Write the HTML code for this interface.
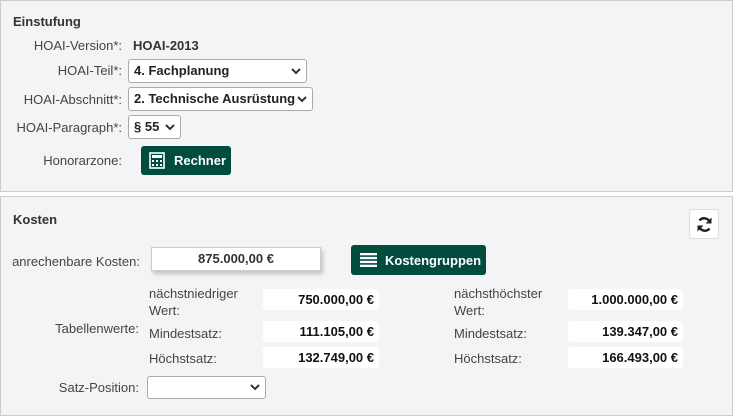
<!DOCTYPE html>
<html><head><meta charset="utf-8"><style>
*{box-sizing:border-box;margin:0;padding:0}
body{width:733px;height:412px;background:#fff;font-family:"Liberation Sans",sans-serif;font-size:13px;color:#333;position:relative;overflow:hidden}
.p{position:absolute;left:0;width:733px;background:#f3f4f6;border:1px solid #ccc}
.a{position:absolute;white-space:nowrap}
.r{text-align:right}
.lbl{color:#444}
.sel{position:absolute;background:#fff;border:1px solid #aaa;border-radius:3px;font-weight:bold;padding-left:5px;line-height:21px;color:#222}
.sel svg{position:absolute;right:5px;top:8px}
.btn{position:absolute;background:#004d3d;color:#fff;font-weight:bold;border-radius:3px}
.v{position:absolute;background:#fff;border-radius:3px;font-weight:bold;text-align:right;padding-right:5px;line-height:21px;color:#111}
</style></head><body>
<div class="p" style="top:0;height:192px"></div>
<div class="p" style="top:196px;height:220px"></div>
<div class="a" style="left:13px;top:14px;font-weight:bold">Einstufung</div>
<div class="a r lbl" style="right:611px;top:38px">HOAI-Version*:</div>
<div class="a" style="left:133px;top:38px;font-weight:bold">HOAI-2013</div>
<div class="a r lbl" style="right:611px;top:63px">HOAI-Teil*:</div>
<div class="sel" style="left:128px;top:59px;width:179px;height:24px">4. Fachplanung<svg width="10" height="7"><path d="M1 1l4 4 4-4" stroke="#333" stroke-width="2" fill="none"/></svg></div>
<div class="a r lbl" style="right:611px;top:92px">HOAI-Abschnitt*:</div>
<div class="sel" style="left:128px;top:87px;width:185px;height:24px">2. Technische Ausrüstung<svg width="10" height="7"><path d="M1 1l4 4 4-4" stroke="#333" stroke-width="2" fill="none"/></svg></div>
<div class="a r lbl" style="right:611px;top:120px">HOAI-Paragraph*:</div>
<div class="sel" style="left:128px;top:115px;width:53px;height:24px">§ 55<svg width="10" height="7"><path d="M1 1l4 4 4-4" stroke="#333" stroke-width="2" fill="none"/></svg></div>
<div class="a r lbl" style="right:611px;top:153px">Honorarzone:</div>
<div class="btn" style="left:141px;top:146px;width:90px;height:29px"><svg style="position:absolute;left:8px;top:6px" width="16" height="17" viewBox="0 0 16 17"><rect x="1" y="1" width="14" height="15" fill="none" stroke="#fff" stroke-width="1.6"/><rect x="3" y="3" width="10" height="3" fill="#fff"/><g fill="#fff"><rect x="3" y="8" width="2" height="2"/><rect x="7" y="8" width="2" height="2"/><rect x="11" y="8" width="2" height="2"/><rect x="3" y="12" width="2" height="2"/><rect x="7" y="12" width="2" height="2"/><rect x="11" y="12" width="2" height="2"/></g></svg><span class="a" style="left:33px;top:7px">Rechner</span></div>
<div class="a" style="left:13px;top:212px;font-weight:bold">Kosten</div>
<div class="a" style="left:689px;top:209px;width:30px;height:30px;background:#fff;border:1px solid #ddd;border-radius:4px"><svg style="position:absolute;left:6px;top:6px" width="17" height="17" viewBox="0 0 17 17"><path d="M14 7A6 6 0 0 0 3.5 4.5M3 10a6 6 0 0 0 10.5 2.5" stroke="#222" stroke-width="2.4" fill="none"/><path d="M15.5 1.5v6h-6z M1.5 15.5v-6h6z" fill="#222"/></svg></div>
<div class="a r lbl" style="right:593px;top:254px">anrechenbare Kosten:</div>
<div class="a" style="left:151px;top:247px;width:170px;height:24px;background:#fff;border:1px solid #ccc;box-shadow:2px 3px 4px rgba(0,0,0,.2);text-align:center;line-height:22px;font-weight:bold">875.000,00 €</div>
<div class="btn" style="left:351px;top:245px;width:135px;height:30px"><svg style="position:absolute;left:9px;top:8px" width="17" height="14"><g fill="#fff"><rect x="0" y="0" width="17" height="2.3"/><rect x="0" y="3.9" width="17" height="2.3"/><rect x="0" y="7.8" width="17" height="2.3"/><rect x="0" y="11.7" width="17" height="2.3"/></g></svg><span class="a" style="left:34px;top:8px">Kostengruppen</span></div>
<div class="a r lbl" style="right:594px;top:321px">Tabellenwerte:</div>
<div class="a lbl" style="left:149px;top:285px;line-height:17px">nächstniedriger<br>Wert:</div>
<div class="a lbl" style="left:149px;top:326px">Mindestsatz:</div>
<div class="a lbl" style="left:149px;top:351px">Höchstsatz:</div>
<div class="v" style="left:263px;top:289px;width:116px">750.000,00 €</div>
<div class="v" style="left:263px;top:321px;width:116px">111.105,00 €</div>
<div class="v" style="left:263px;top:347px;width:116px">132.749,00 €</div>
<div class="a lbl" style="left:454px;top:285px;line-height:17px">nächsthöchster<br>Wert:</div>
<div class="a lbl" style="left:454px;top:326px">Mindestsatz:</div>
<div class="a lbl" style="left:454px;top:351px">Höchstsatz:</div>
<div class="v" style="left:568px;top:289px;width:115px">1.000.000,00 €</div>
<div class="v" style="left:568px;top:321px;width:115px">139.347,00 €</div>
<div class="v" style="left:568px;top:347px;width:115px">166.493,00 €</div>
<div class="a r lbl" style="right:594px;top:380px">Satz-Position:</div>
<div class="sel" style="left:147px;top:376px;width:119px;height:23px"><svg width="10" height="7" style="top:7px"><path d="M1 1l4 4 4-4" stroke="#333" stroke-width="2" fill="none"/></svg></div>
</body></html>
